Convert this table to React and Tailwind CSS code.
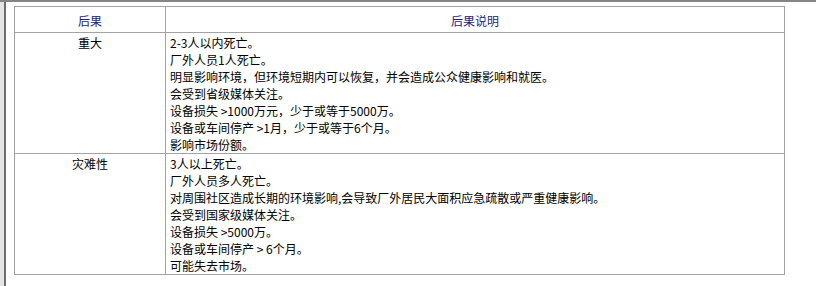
import React from "react";

const rows = [
  {
    level: "重大",
    lines: [
      "2-3人以内死亡。",
      "厂外人员1人死亡。",
      "明显影响环境，但环境短期内可以恢复，并会造成公众健康影响和就医。",
      "会受到省级媒体关注。",
      "设备损失 >1000万元，少于或等于5000万。",
      "设备或车间停产 >1月，少于或等于6个月。",
      "影响市场份额。",
    ],
  },
  {
    level: "灾难性",
    lines: [
      "3人以上死亡。",
      "厂外人员多人死亡。",
      "对周围社区造成长期的环境影响,会导致厂外居民大面积应急疏散或严重健康影响。",
      "会受到国家级媒体关注。",
      "设备损失 >5000万。",
      "设备或车间停产 > 6个月。",
      "可能失去市场。",
    ],
  },
];

export default function App() {
  return (
    <div
      className="w-[816px] h-[286px] bg-white flex border-t-2 border-[#858585] overflow-hidden text-[12px] text-black"
      style={{ fontFamily: '"Noto Sans CJK SC", "Noto Sans", sans-serif' }}
    >
      {/* window frame edge */}
      <div className="w-[4px] h-full bg-[#e4e4e4]" />
      <div className="w-[2px] h-full bg-[#6e6e6e]" />

      <div className="flex-1 pl-[8px] pt-[4px]">
        <table className="w-[771px] border-collapse border border-[#a3a3a3]">
          <thead>
            <tr className="h-[26px]">
              <th className="w-[151px] border border-[#a3a3a3] font-normal text-[#1c1c88] text-center leading-[17px] pt-[1px]">
                后果
              </th>
              <th className="border border-[#a3a3a3] font-normal text-[#1c1c88] text-center leading-[17px] pt-[1px]">
                后果说明
              </th>
            </tr>
          </thead>
          <tbody>
            {rows.map((row) => (
              <tr key={row.level}>
                <td className="border border-[#a3a3a3] align-top text-center leading-[17px] pt-[1px] pb-0">
                  {row.level}
                </td>
                <td className="border border-[#a3a3a3] align-top leading-[17px] pl-[4px] pt-[1px] pb-0">
                  {row.lines.map((line, i) => (
                    <div key={i}>{line}</div>
                  ))}
                </td>
              </tr>
            ))}
          </tbody>
        </table>
      </div>
    </div>
  );
}
